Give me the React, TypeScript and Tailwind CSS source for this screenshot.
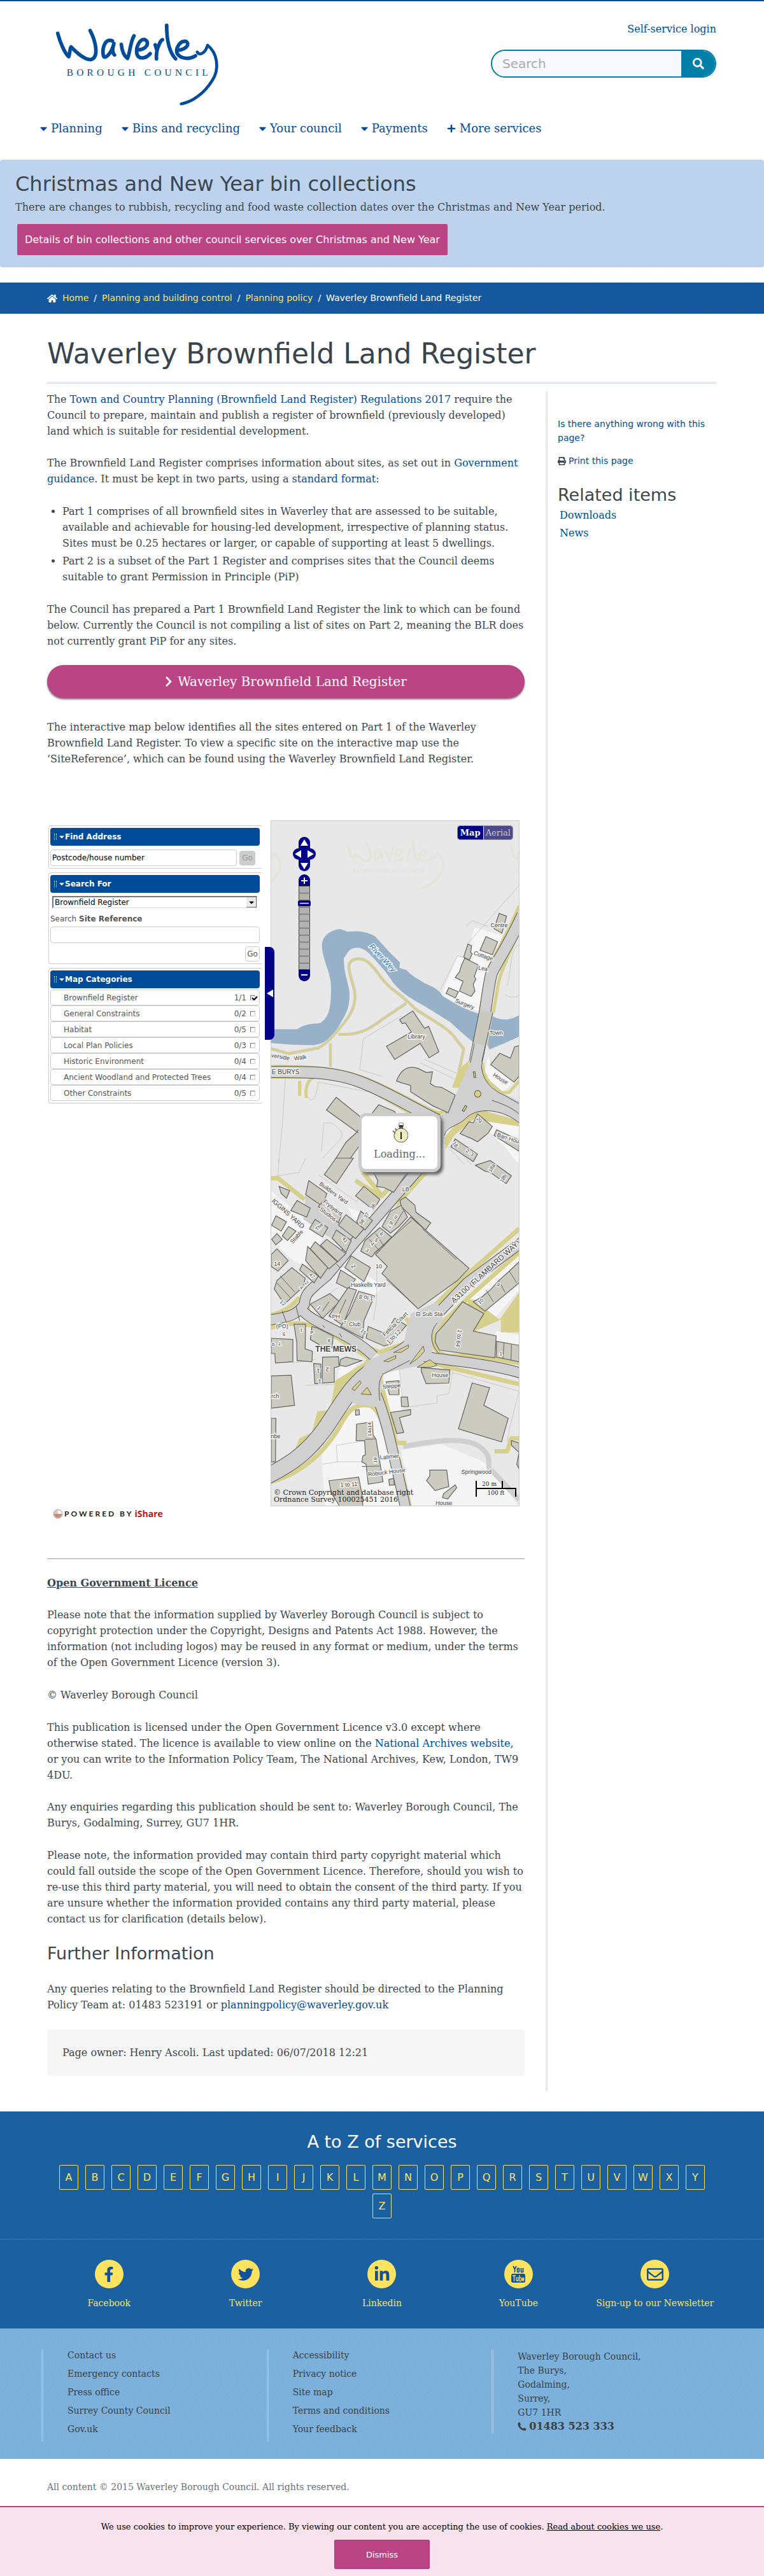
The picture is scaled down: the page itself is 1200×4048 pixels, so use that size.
import React from "react";
import { FaCaretDown, FaPlus, FaSearch, FaHome, FaPrint, FaChevronRight, FaFacebookF, FaTwitter, FaLinkedinIn, FaRegEnvelope, FaPhoneAlt } from "react-icons/fa";

const link = "text-[#004c9b] hover:underline";

function Logo() {
  return (
    <svg viewBox="75 40 790 405" className="h-[135px] w-[263px]" role="img" aria-label="Waverley Borough Council">
      <g fill="none" stroke="#004c9b" strokeWidth="17" strokeLinecap="round" strokeLinejoin="round">
        <path d="M92 98C103 140 125 192 144 208C149 200 148 172 155 162C175 182 215 224 248 222C288 214 272 135 245 85" />
        <path d="M350 134C318 118 300 165 307 202C314 228 348 188 357 146C350 170 350 192 360 200" />
        <path d="M392 150C395 180 405 205 421 216C434 190 434 138 452 110" />
        <path d="M474 176C508 174 526 146 508 130C482 114 458 165 466 197C476 222 508 218 528 194" />
        <path d="M558 218C556 190 562 168 570 152C574 140 578 132 586 128M552 152L560 178" />
        <path d="M606 60C606 110 612 180 648 218" />
        <path d="M660 178C700 174 716 148 698 136C668 130 646 170 656 194C672 220 716 222 742 204" />
        <path d="M750 186C762 208 790 188 799 154C842 188 860 262 820 322C784 380 728 422 675 431" strokeWidth="14" />
      </g>
      <text x="134" y="299" fontSize="46" letterSpacing="16" fill="#004c9b" fontFamily="Liberation Serif, serif">BOROUGH COUNCIL</text>
    </svg>
  );
}

/* Two survey sheets cover the map; each one has its own grid. */
const sheets = {
  north: { x: -26, y: -20, sx: 1 / 3, sy: 1 / 2.8 },
  south: { x: -26, y: 530, sx: 1 / 3, sy: 1 / 2.7034 },
};
type Sheet = keyof typeof sheets;
type LabelData = [string, number, number, number?, number?];

function Labels({ sheet, items }: { sheet: Sheet; items: LabelData[] }) {
  const s = sheets[sheet];
  return (
    <g fill="#444" stroke="#f4f4f4" strokeWidth="3" paintOrder="stroke" textAnchor="middle" fontFamily="Liberation Sans, sans-serif">
      {items.map(([t, x, y, r = 0, size = 9], i) => (
        <text key={i} fontSize={size} dominantBaseline="central" transform={`translate(${s.x + x * s.sx} ${s.y + y * s.sy}) rotate(${r})`}>{t}</text>
      ))}
    </g>
  );
}

const tr = (n: Sheet) => `translate(${sheets[n].x} ${sheets[n].y}) scale(${sheets[n].sx} ${sheets[n].sy})`;

function Lines({ d, color, w }: { d: string[]; color: string; w: number }) {
  return <>{d.map((p, i) => <path key={i} d={p} fill="none" stroke={color} strokeWidth={w} vectorEffect="non-scaling-stroke" strokeLinejoin="round" />)}</>;
}
function Blocks({ d }: { d: string[] }) {
  return <g fill="#cbcbc0" stroke="#636363" strokeWidth="1.2">{d.map((p, i) => <path key={i} d={"M" + p + "Z"} vectorEffect="non-scaling-stroke" />)}</g>;
}
function Watermark({ x, y }: { x: number; y: number }) {
  return (
    <g transform={`translate(${x} ${y})`} opacity=".7">
      <g transform="scale(.2)" fill="none" stroke="#e4e4d4" strokeWidth="18" strokeLinecap="round">
        <path d="M0 58C11 100 33 150 52 168L63 122C83 142 123 184 156 182C196 174 180 95 153 45M258 94C226 78 208 125 215 162C222 188 256 148 265 106L268 160M300 110L329 176L360 70M382 136C416 134 434 106 416 90C390 74 366 125 374 157C384 182 416 178 436 154M466 178L490 88M514 20C514 70 520 140 556 178M568 138C608 134 624 108 606 96C576 90 554 130 564 154C580 180 624 182 650 164M658 146C670 168 698 148 707 114C750 148 768 222 728 282C692 340 636 382 583 391" />
      </g>
      <text x="8" y="55" fontSize="9" letterSpacing="2" fill="#e1e1d2" fontFamily="Liberation Serif, serif">BOROUGH COUNCIL</text>
    </g>
  );
}

const northPaths = [
  "M77 1058L160 1080L300 1055C350 1030 390 980 425 940C460 900 480 850 470 800C460 760 440 720 445 690C450 660 500 655 530 675C580 710 580 740 640 790C700 830 720 850 760 885C830 930 900 960 940 1005L985 1060L960 1170",
  "M395 995C480 1000 530 980 600 930L715 858",
  "M357 1035L357 1138",
];
const northVerge = [
  "M77 1137C300 1135 430 1150 540 1195C660 1240 760 1300 860 1340C940 1340 960 1260 1000 1160",
  "M77 1183L290 1183C420 1195 480 1210 560 1250L740 1345",
  "M244 1275C236 1230 250 1185 290 1183",
  "M212 1200L212 1266",
  "M1246 430C1190 560 1110 670 1098 720C1080 770 1075 850 1062 885",
  "M1075 1120C1070 1190 1120 1220 1165 1252L1200 1250L1246 1200",
  "M1246 540C1190 660 1150 740 1145 790L1125 900",
];
const northRoads = [
  "M60 1161C250 1158 380 1160 500 1205C640 1255 760 1330 880 1380",
  "M1262 470C1200 600 1130 690 1115 730C1090 830 1085 950 1045 1115C1030 1190 980 1310 890 1390",
];
const northBlocks = [
  "683 930L745 892L800 968L820 960L868 1072L822 1098L780 1035L660 1106L621 1048L738 985L710 945L695 948",
  "668 1200C690 1150 720 1130 770 1145L808 1163L838 1160L828 1212L850 1225L880 1228L945 1262L912 1340L840 1310L735 1248L735 1220L690 1208",
  "384 1272L495 1355L495 1410L476 1430L430 1470L365 1568L430 1568L520 1450L338 1328",
  "555 1340L585 1305L660 1335L690 1400L560 1400",
  "1152 463L1187 475L1165 550L1128 530",
  "1090 565L1145 588L1120 645L1062 625",
  "990 660L1055 690L1035 740L1042 752L1030 775L1038 805L1020 828L965 805L982 762L945 745L965 720L975 690",
  "915 790L960 808L945 835L902 815",
  "1005 598L1022 606L1018 635L1025 640L1012 668L985 655",
  "1155 1078L1205 1100L1225 1050L1246 1045L1246 1180L1222 1205L1112 1128",
  "1010 1380L1030 1385L1050 1345L1120 1400L1100 1430L1050 1468L1025 1455L968 1432",
  "945 1455L1050 1522L1030 1555L925 1490",
  "1140 1415L1246 1460L1246 1510L1128 1440",
];
const plotLines = [
  "M145 1180L130 1400L112 1568", "M300 1205L600 1260", "M512 1015L690 915M512 1015L495 1150L600 1180", "M1246 340L1000 600",
  "M875 800L955 650L1000 660", "M995 520L1025 495L1098 520", "M250 1270C270 1300 290 1280 300 1205", "M315 1510L325 1385L360 1385C390 1400 430 1430 400 1460L320 1540",
  "M780 1120L960 1200M800 1105L960 1170", "M1246 600C1200 620 1210 720 1190 780M1180 820C1210 840 1246 830 1246 820", "M880 1460L990 1568M900 1440L1020 1568",
];

const southVerge = [
  "M800 60L630 215L480 370L400 455L255 590C230 650 270 700 400 755L590 825L700 790C740 760 740 700 710 680",
  "M700 60L600 160L510 60M595 165L475 95",
  "M77 85L110 85L235 175",
  "M77 665C130 660 190 620 210 590",
  "M77 720C190 690 240 700 330 730L540 850C520 890 440 960 400 1020C370 1090 330 1150 260 1220C190 1280 130 1310 77 1325",
  "M1246 300L1000 495L830 640",
  "M1246 400L1010 590L850 730C830 770 840 830 910 840L1050 840L1246 870",
  "M820 860L900 885L1246 960",
  "M77 1375C220 1340 330 1250 400 1140C450 1050 490 1045 540 1050C580 1060 600 1120 660 1220L730 1478",
  "M590 920C600 1000 640 1090 665 1210L715 1210",
  "M1130 1245L1190 1245L1210 1190L1246 1190",
];
const southRoads = [
  "M780 40L620 205L470 360L340 500C260 560 235 575 235 620C190 680 130 675 60 690",
  "M220 640C260 700 450 740 560 840",
  "M1262 355L1000 530L800 720",
  "M780 840C900 860 1100 870 1262 915",
  "M570 1000C610 1080 640 1200 670 1320L712 1490",
];
const southWide = ["M800 720C780 800 640 850 560 900C460 950 400 1060 330 1150C250 1250 170 1300 60 1350"];
const southBlocks = [
  "735 250L1010 468L955 520L770 640L600 490L625 460L570 410",
  "383 0L465 0L385 108L328 70", "560 60L720 60L655 145L610 125L575 120L580 95",
  "115 120L165 138L150 170L125 150", "255 95L340 150L320 205L240 155", "300 205L330 175L410 240L395 275",
  "515 120L590 175L560 220L475 160", "430 240L515 300L475 342L395 285", "500 225L555 265L520 305L480 270",
  "685 180L710 165L755 200L760 230L830 275L805 305L690 205", "640 225L690 200L720 250L680 290L640 318L600 290",
  "590 295L645 335L550 420L500 395L520 350", "455 415L545 465L515 525L425 465", "405 475L475 515L440 555L385 530",
  "200 180L262 212L245 250L170 222", "100 245L150 270L125 310L80 285", "285 260L345 295L320 335L258 300", "160 290L195 310L155 350L130 330", "105 320L130 345L100 368L80 345",
  "250 375L345 465L310 510L240 435", "285 355L390 440L350 470L262 385", "340 345L430 405L392 440L310 370", "385 305L455 350L430 400L365 340",
  "175 465L238 510L230 545L140 620L92 555L105 520", "225 450L300 500L280 530L212 475", "78 410L105 385L158 435L110 480L78 460",
  "355 575L400 610L320 680L262 620", "440 550L480 560L415 710L350 670", "490 565L565 585L515 690L510 765L405 715L445 660",
  "535 715L615 745L660 680L715 710L640 790L610 798L525 765",
  "185 705L240 705L238 810L272 820L270 865L200 860L198 780", "78 765L180 770L180 865L98 870L95 830L78 830", "270 715L290 720L370 755L365 805L310 795L262 770",
  "320 845L395 843L398 885L375 890L375 952L318 955", "278 872L312 875L312 958L283 958", "430 845L505 860L430 885L400 880L405 855",
  "78 925L172 922L188 1050L78 1062", "78 1105L100 1105L98 1290L78 1290",
  "785 890L920 900L915 955L808 958L785 905", "1025 955L1107 975L1080 1050L1195 1105L1163 1205L960 1150",
  "620 950L680 945L680 1005L635 1005", "690 1015L720 1015L725 1055L692 1055", "640 1080L735 1068L735 1090L682 1102L702 1165L670 1170",
  "475 1070L492 1068L494 1090L476 1092", "480 1130L555 1120L558 1175L572 1195L585 1265L605 1375L535 1385L525 1300L505 1290L510 1265L522 1260L518 1200L478 1200",
  "350 1370L490 1355L505 1425L510 1478L400 1478L360 1420", "632 1365L655 1360L658 1388L635 1390",
  "825 1325L905 1325L915 1395L850 1412L810 1370L825 1350", "890 1425L945 1388L952 1400L925 1430L910 1448L885 1442",
  "980 610L1080 660L1030 735L1138 755L1132 848L870 815L850 780L855 745L910 690",
  "1030 610L1070 590L1110 560L1150 520L1200 480L1246 440L1246 530L1085 650", "1140 778L1246 795L1246 865L1138 845",
  "1040 30L1110 10L1210 75L1185 108L1110 60L1085 55", "1210 1200L1246 1210L1246 1320L1235 1300L1246 1250L1210 1220",
];
const islands = ["M458 980L495 945L502 955L470 988Z", "M502 1002L530 973L550 1005Z", "M608 862L665 838L665 850L630 865Z", "M655 825L725 793L725 805L690 825Z", "M730 875L795 798L800 820L770 850Z", "M765 888L825 856L860 880L830 888Z"];

function MapDrawing() {
  return (
    <svg viewBox="0 0 389 1076" preserveAspectRatio="xMidYMid slice" className="block h-full w-full" aria-label="Map of Godalming" role="img">
      <rect width="389" height="1076" fill="#e8e8e8" />
      <Watermark x={120} y={27} /><Watermark x={-136} y={27} /><Watermark x={376} y={27} />
      <g transform={tr("north")}>
        <path d="M1035 525L1170 560L1070 900L880 825L955 650L1000 660Z M1112 1128L1222 1205L1170 1250L1080 1180L1100 1090Z M1040 1330L1246 1400L1246 1568L1180 1490L1110 1430Z" fill="#f6f6f6" />
        <Lines d={plotLines} color="#c9c9c4" w={1} />
        <path fill="#97b1c8" d="M77 972L200 973C240 945 280 950 310 945C350 920 360 880 360 790C360 720 315 660 317 600C320 555 370 532 405 532L435 543C480 540 520 540 565 562C600 595 640 640 660 655L685 680L682 703L715 712C740 740 770 750 800 770C840 785 870 800 885 825C940 860 1000 890 1060 905L1120 915C1170 940 1210 930 1246 910L1246 1005C1190 1030 1150 1045 1105 1062L1098 1040L1030 1030C990 1000 950 965 920 940C850 900 820 880 780 860C720 830 680 800 650 765C620 720 590 690 540 640C500 600 450 610 435 640L420 660C420 740 450 780 447 830C445 890 420 920 405 945C380 990 340 1040 270 1043L165 1040L77 1033Z" />
        <Lines d={northPaths} color="#cfcfcb" w={5} />
        <Lines d={northPaths} color="#d6d08c" w={3} />
        <Lines d={northVerge} color="#d6d08c" w={5} />
        <path d="M960 1150L1015 1105L985 1230L930 1230Z M895 1450L900 1500L940 1440L1030 1370L1246 1400L1246 1375L1060 1325L950 1385Z" fill="#d6d08c" />
        <Lines d={northRoads} color="#555" w={19} />
        <path d="M1015 1120L1070 1120C1068 1200 1120 1240 1180 1260L1246 1290L1246 1385C1180 1330 1060 1310 1000 1360C960 1400 900 1400 895 1440L870 1568L720 1568L780 1450L840 1360L910 1340Z" fill="#d0d0d0" />
        <Lines d={["M1068 1120C1068 1200 1120 1240 1180 1265L1246 1300", "M1246 1385C1180 1330 1060 1310 1000 1360C960 1400 900 1400 895 1440"]} color="#555" w={1} />
        <Lines d={northRoads} color="#d0d0d0" w={17} />
        <path d="M1060 885L1125 900L1098 1045L1030 1035Z" fill="#c9c9bf" />
        <Lines d={["M1060 885L1012 1110", "M1122 900L1070 1115", "M1118 1285C1160 1300 1200 1310 1246 1345"]} color="#555" w={1} />
        <ellipse cx="1051" cy="1257" rx="15" ry="15" fill="#d6d08c" stroke="#555" strokeWidth="3" />
        <path d="M1030 1160L1038 1160L1042 1185L1034 1185Z M978 1330L992 1308L1000 1313L986 1335Z" fill="#d6d08c" stroke="#555" strokeWidth="3" />
        <Blocks d={northBlocks} />
      </g>
      <g transform={tr("south")}>
        <path d="M77 140L330 330L250 460L190 440L77 350Z M440 210L560 250L500 330Z M380 460L500 480L600 540L560 600L500 580L450 560Z M1246 410L1010 600L1130 680L1246 560Z M1140 735L1246 750L1246 880L1090 850Z M590 930L680 880L700 1050L660 1130Z M315 1250L460 1050L560 1060L660 1300L680 1478L330 1478Z M690 1240L880 1215L1080 1290L1246 1478L740 1478Z M400 860L510 850L390 960Z" fill="#f5f5f5" />
        <Lines color="#cacac5" w={1} d={["M680 880L700 1060L860 1040L860 1010L915 1000L935 900", "M385 1220L520 1200M385 1220L390 1290L510 1290M320 1300L390 1290", "M115 0L110 80M77 80L210 60L240 0", "M180 870L290 855M240 965L390 960", "M575 450L575 600L560 690", "M300 70L480 185L500 150", "M930 910L1246 990L1200 1150L1190 1205", "M250 450L240 510M360 570L400 545"]} />
        <Lines color="#cfcfcf" w={8} d={["M700 1225C900 1190 1000 1190 1060 1225C1130 1270 1090 1310 1110 1320L1246 1450"]} />
        <path d="M240 150L480 340L440 390L230 260Z" fill="#d0d0d0" />
        <Lines d={southVerge} color="#d6d08c" w={7} />
        <path d="M380 945L540 855L420 1060L320 1190L77 1340L77 1310L185 1250L210 1190L270 1165L295 1075L355 1070Z M725 60L820 60L660 220Z M1000 600L1030 600L1160 690L1160 740L1246 740L1246 570L1150 690L1035 735Z" fill="#d6d08c" />
        <Lines d={southRoads} color="#555" w={17} />
        <Lines d={southWide} color="#555" w={26} />
        <Lines d={southRoads} color="#d0d0d0" w={15} />
        <Lines d={southWide} color="#d0d0d0" w={24} />
        <path d="M735 660L860 610L890 690L835 750L840 820L780 880L600 915L590 1060L460 1040L450 950L545 855L700 790Z" fill="#d0d0d0" />
        <Lines d={["M590 1030C580 960 590 930 610 915L730 860", "M860 700C820 740 830 800 870 830", "M130 650L150 700M195 630L212 690", "M385 450L402 465M320 710L330 720M400 745L410 760"]} color="#555" w={1} />
        <g fill="#d6d08c" stroke="#555" strokeWidth="2.5">{islands.map((d, i) => <path key={i} d={d} />)}</g>
        <Blocks d={southBlocks} />
        <Lines color="#636363" w={1} d={["M560 405L740 265", "M790 300L950 430", "M620 515L760 630", "M700 225L660 285M570 320L610 375M540 345L590 395", "M320 650L350 610M385 690L430 600", "M1090 560L1125 610M1150 520L1180 570M1200 480L1235 530", "M1175 782L1170 852M1210 790L1208 858", "M520 1195L572 1192M505 1310L590 1308", "M120 500L190 570M105 530L170 595"]} />
      </g>
      <Labels sheet="north" items={[["Centre", 1152, 514, 0, 9], ["Cottage", 1078, 650, 18], ["Lea", 1076, 705, 10], ["Surgery", 990, 862, 22], ["Library", 762, 1004], ["Town", 1138, 988], ["House", 1158, 1190, 32], ["verside", 122, 1094, 10], ["Walk", 215, 1098, -8], ["E BURYS", 146, 1160, 0, 10], ["20", 1058, 1372, 50, 8], ["Barr Hou", 1194, 1452, 18], ["18", 945, 1480, 60, 8], ["2", 1003, 1508, 30, 8], ["3", 1024, 1524, 30, 8]]} />
      <g fill="#1470c8" stroke="#f4f8fc" strokeWidth="3" paintOrder="stroke" fontFamily="Liberation Sans, sans-serif">
        <text fontSize="12" fontStyle="italic" textAnchor="middle" transform="translate(172 218) rotate(47)">River Wey</text>
      </g>
      <Labels sheet="south" items={[["LB", 712, 133], ["18a", 1118, 42, -60, 8], ["18b", 1172, 86, -60, 8], ["Builders Yard", 372, 148, 36], ["Frysyard", 368, 210, 38], ["Studios", 345, 238, 38], ["IGGINS YARD", 158, 235, 42, 10], ["Stable", 198, 333, -48], ["The", 305, 292, -45, 8], ["36", 558, 205, -55, 8], ["37", 527, 243, -55, 8], ["38", 505, 272, -55, 8], ["41", 425, 347, 50, 8], ["9", 665, 250, 40, 8], ["8 7", 638, 282, 120, 8], ["6", 597, 322, 40, 8], ["5", 573, 348, 40, 8], ["4", 555, 365, 40, 8], ["3", 530, 392, 40, 8], ["14", 106, 450], ["47", 270, 500, 45, 8], ["2", 245, 530, 40, 8], ["4", 220, 550, 40, 8], ["12", 132, 615, 40, 8], ["2", 465, 460, 60, 9], ["10", 585, 460], ["Haskells Yard", 535, 537], ["1", 303, 637, 40, 8], ["PH", 383, 674], ["7", 425, 698, 0, 8], ["Club", 472, 705], ["15", 512, 738, 40, 8], ["1 to 8", 525, 593, 188], ["Felicia Court", 662, 705, -44], ["1 to 12", 655, 758, -44], ["⊟ Sub Sta", 822, 661], ["(PO)", 130, 713], ["5", 138, 748, 180, 8], ["7", 118, 788, 180, 8], ["6", 88, 790, 0, 8], ["1", 220, 730, 180, 8], ["4", 268, 740, 60, 8], ["8", 350, 775, 0, 8], ["2", 342, 898, 180, 9], ["1", 300, 902, 180, 9], ["1", 307, 948, 180, 9], ["9", 1148, 537, 40, 8], ["10", 1065, 608, -40, 8], ["1 to 64", 962, 765, 97], ["1", 1160, 832, 0, 8], ["House", 874, 921], ["Steppe", 645, 968, -5], ["rch", 97, 1010], ["nbe", 99, 1181], ["14a14", 540, 1152, -90, 8], ["18", 568, 1283, -90, 8], ["Latimer", 635, 1268, -5], ["Robuck House", 622, 1334, -7], ["1 to 11", 444, 1386, -4], ["Springwood", 1045, 1332], ["House", 892, 1465]]} />
      <Labels sheet="south" items={[["A3100 (FLAMBARD WAY)", 1088, 482, -42, 12]]} />
      <g fontWeight="bold"><Labels sheet="south" items={[["THE MEWS", 383, 811, 0, 12]]} /></g>
    </svg>
  );
}

function PanZoom() {
  return (
    <svg viewBox="0 0 36 228" className="absolute top-[25px] left-[34px] h-[228px] w-9" aria-label="Map pan and zoom" role="img">
      <rect x="9" width="18" height="54" rx="9" fill="#00008b" />
      <rect y="18" width="36" height="18" rx="9" fill="#00008b" />
      <g fill="#fff"><path d="M18 4L24 14H12Z" /><path d="M18 51L24 41H12Z" /><path d="M3 27L13 21V33Z" /><path d="M33 27L23 21V33Z" /></g>
      <path d="M9 77V68a9 9 0 0 1 18 0v9Z M9 209v9a9 9 0 0 0 18 0v-9Z" fill="#00008b" />
      <path d="M13 69h10M18 64v10M13 217h10" stroke="#fff" strokeWidth="2" />
      <rect x="9.5" y="77.500" width="17" height="131" fill="#b2b2b2" stroke="#444" />
      <path d="M9 88.500h18M9 99.500h18M9 110.500h18M9 121.500h18M9 132.500h18M9 143.500h18M9 154.500h18M9 165.500h18M9 176.500h18M9 187.500h18M9 198.500h18" stroke="#777" strokeWidth="1.500" />
      <rect x="8" y="100" width="20" height="9" rx="2" fill="#00008b" /><path d="M11 104.500h14" stroke="#fff" strokeWidth="1.500" />
    </svg>
  );
}

function Panel({ title, children }: { title: string; children: React.ReactNode }) {
  return (
    <section className="mb-1.5 rounded-l border border-r-0 border-[#ccc] py-[3px] pr-[3px] pl-0.5">
      <h3 className="flex h-7 items-center rounded bg-[#004c9b] pl-1.5 font-bold text-white">
        <span className="mr-1 h-[10px] w-1 border-x border-dotted border-white" />
        <FaCaretDown className="mr-px h-3 w-2" />{title}
      </h3>
      {children}
    </section>
  );
}

const categories = [["Brownfield Register", "1/1"], ["General Constraints", "0/2"], ["Habitat", "0/5"], ["Local Plan Policies", "0/3"], ["Historic Environment", "0/4"], ["Ancient Woodland and Protected Trees", "0/4"], ["Other Constraints", "0/5"]];

function MapWidget() {
  return (
    <div className="relative flex justify-between pr-2 pl-0.5">
      <div className="flex w-[335px] flex-col pt-2 font-[DejaVu_Sans,sans-serif] text-[12px] leading-4 text-[#555]">
        <Panel title="Find Address">
          <div className="mt-1.5 flex items-center gap-1">
            <input aria-label="Postcode or house number" defaultValue="Postcode/house number" className="h-[26px] w-[293px] rounded border border-[#ccc] px-0.5 text-black" />
            <button disabled className="h-[23px] w-[25px] rounded bg-[#ccc] text-[#999]">Go</button>
          </div>
        </Panel>
        <Panel title="Search For">
          <div className="relative mt-[5px] mr-1 ml-[3px]">
            <select aria-label="Search for" className="h-[19px] w-full appearance-none border border-t-2 border-l-2 border-[#ddd] border-t-[#777] border-l-[#777] bg-white pl-0.5 text-black"><option>Brownfield Register</option></select>
            <span className="pointer-events-none absolute top-0.5 right-px flex h-4 w-4 items-center justify-center border-r border-b border-[#777] bg-[#eceae6] text-black"><FaCaretDown /></span>
          </div>
          <label htmlFor="siteref" className="mt-[9px] block">Search <b>Site Reference</b></label>
          <input id="siteref" className="mt-1 h-[26px] w-full rounded border border-[#ccc] px-1" />
          <div className="mt-[5px] flex justify-end"><button className="h-6 w-[23px] rounded border border-[#ccc]">Go</button></div>
        </Panel>
        <Panel title="Map Categories">
          <ul className="mt-0.5">
            {categories.map(([n, c], i) => (
              <li key={n} className="flex h-[25px] items-center rounded border border-[#ccc] pr-1.5 pl-5">
                <label htmlFor={"cat" + i} className="flex-1">{n}</label>
                <span className="mr-1.5">{c}</span>
                <span className="relative size-2">
                  <input id={"cat" + i} type="checkbox" defaultChecked={i === 0} className="peer block size-2 appearance-none border border-[#ccc] border-t-[#777] border-l-[#777] bg-white" />
                  <svg viewBox="0 0 10 8" className="pointer-events-none absolute top-px left-0.5 hidden h-2 w-2.5 peer-checked:block"><path d="M1 3l3 3 5-5" fill="none" stroke="#000" strokeWidth="2.200" /></svg>
                </span>
              </li>
            ))}
          </ul>
        </Panel>
        <p className="mt-auto flex items-center gap-0.5 pl-[7px] text-[12px] font-bold text-[#222]">
          <svg viewBox="0 0 16 16" className="size-4"><circle cx="8" cy="8" r="7" fill="#dcc8bf" stroke="#aaa" /><path d="M8 8V2a6 6 0 0 1 6 6Z" fill="#fff" /><path d="M8 8h6a6 6 0 0 1-12 0Z" fill="#c98d78" /></svg>
          <span className="font-[Lato,sans-serif] tracking-[3px]">POWERED BY</span><span className="font-[Open_Sans,sans-serif] text-[14px] text-[#b8141a]">iShare</span>
        </p>
      </div>
      <button aria-label="Hide panel" className="absolute top-[199px] left-[342px] z-10 flex h-[146px] w-[15px] items-center justify-center rounded-r-lg bg-[#00008b] text-white">
        <svg viewBox="0 0 10 12" className="h-3 w-2.5"><path d="M0 6L10 0V12Z" fill="#fff" /></svg>
      </button>
      <div className="relative mb-5 h-[1078px] w-[391px] border border-[#ccc]">
        <MapDrawing />
        <PanZoom />
        <div className="absolute top-[7px] right-[9px] flex gap-px rounded border border-[#999] text-[13px] leading-[21px]">
          <button className="rounded-l bg-[#00008b] px-1 font-bold text-white">Map</button>
          <button className="rounded-r bg-[#4a4a8b] px-[3px] text-[#c8c8d8]">Aerial</button>
        </div>
        <div className="absolute top-[459px] left-[137px] flex h-[93px] w-[129px] flex-col items-center rounded-xl border-[5px] border-[#ccc] bg-white pt-2.5 text-[16px] leading-6 text-[#666] shadow-[4px_4px_4px_#666]">
          <svg viewBox="0 0 26 32" className="h-8 w-[26px]"><circle cx="15" cy="20" r="11" fill="#eeeec0" stroke="#555" /><path d="M15 15V26" stroke="#222" strokeWidth="2" /><rect x="12" y="4" width="6" height="5" fill="#333" /><circle cx="15" cy="4" r="4" fill="none" stroke="#777" /><path d="M2 13l4 4M6 9l2 4" stroke="#777" strokeWidth="2" /></svg>
          <span className="mt-1.5">Loading...</span>
        </div>
        <p className="absolute bottom-1 left-1 text-[11px] leading-[11px] whitespace-nowrap text-[#222]">© Crown Copyright and database right<br />Ordnance Survey 100025451 2016</p>
        <div className="absolute right-1 bottom-[14px] w-16 text-center text-[9px] leading-[11px] text-[#222]">
          <div className="w-[43px] border-x-2 border-black">20 m</div>
          <div className="border-x-2 border-t-2 border-black pt-px">100 ft</div>
        </div>
      </div>
    </div>
  );
}

const letters = "ABCDEFGHIJKLMNOPQRSTUVWXYZ".split("");

function YouTubeMark() {
  return (
    <svg viewBox="0 0 24 28" className="h-7 w-6" role="img" aria-label="YouTube">
      <g fill="none" stroke="#0f519c" strokeWidth="1.800"><path d="M4 1l2.500 5v5M9 1L6.500 6" /><rect x="10.500" y="4.500" width="3" height="6" rx="1.500" /><path d="M16.500 4v5.500c0 2 3 1 3-.5M19.500 4v7" /></g>
      <rect x="1" y="13" width="22" height="14" rx="3" fill="#0f519c" />
      <g fill="none" stroke="#ffe25e" strokeWidth="1.300"><path d="M3 16h5M5.500 16v9M9 18v5c0 2 2 1 2.500 0M11.700 18v7M14 15v9.500c3 1 3-1 3-3s-1-3-3-2M21 22h-2.500c0 3.500 2.500 2 2.500.5M18.500 22c0-4 2.500-3 2.500 0" /></g>
    </svg>
  );
}

const socials: [string, React.ReactNode][] = [
  ["Facebook", <FaFacebookF className="size-6" />], ["Twitter", <FaTwitter className="size-6" />], ["Linkedin", <FaLinkedinIn className="size-[26px]" />], ["YouTube", <YouTubeMark />], ["Sign-up to our Newsletter", <FaRegEnvelope className="size-[26px]" />],
];

export default function App() {
  return (
    <div className="bg-white font-[DejaVu_Serif,serif] text-[16px] leading-[25px] text-[#3c4650]">
      <header className="h-[251px] border-t-2 border-[#004c9b]">
        <div className="flex h-[172px] justify-between pr-[75px] pl-[85px]">
          <a href="#" className="pt-[31px]"><Logo /></a>
          <div className="flex flex-col items-end pt-[31px]">
            <a href="#" className={link}>Self-service login</a>
            <form className="mt-5 flex h-11 w-[354px] overflow-hidden rounded-full border-2 border-[#007fa8] bg-[#f8f9ff] font-[DejaVu_Sans,sans-serif]">
              <input aria-label="Search" placeholder="Search" className="w-full min-w-0 flex-1 bg-transparent pl-4 text-[20px] outline-none placeholder:text-[#aaa]" />
              <button type="button" aria-label="Search" className="flex w-[53px] items-center justify-center bg-[#007fa8] text-white"><FaSearch className="size-[18px]" /></button>
            </form>
          </div>
        </div>
        <nav className="mt-4 flex gap-[30px] pl-[63px] text-[18px] leading-6 text-[#004c9b]">
          {["Planning", "Bins and recycling", "Your council", "Payments"].map((n) => <a href="#" key={n} className="flex items-center gap-1.5"><FaCaretDown className="h-[18px] w-[11px]" />{n}</a>)}
          <a href="#" className="flex items-center gap-1.5"><FaPlus className="size-3.5" />More services</a>
        </nav>
      </header>

      <section className="rounded-sm bg-[#bcd2ed] px-6 pt-[18px] pb-[19px]">
        <h2 className="font-[DejaVu_Sans,sans-serif] text-[32px] leading-10">Christmas and New Year bin collections</h2>
        <p className="mt-1">There are changes to rubbish, recycling and food waste collection dates over the Christmas and New Year period.</p>
        <a href="#" className="mt-3.5 ml-[3px] inline-block rounded-xs bg-[#bb4484] px-3 py-3 font-[DejaVu_Sans,sans-serif] text-[16px] text-white">Details of bin collections and other council services over Christmas and New Year</a>
      </section>

      <nav aria-label="Breadcrumb" className="mt-6 flex h-[49px] items-center gap-2 bg-[repeating-linear-gradient(150deg,#0f57a5_0_1px,#17589a_1px_3px)] px-[74px] font-[DejaVu_Sans,sans-serif] text-[14px] text-white">
        <FaHome className="size-4" />
        <a href="#" className="text-[#ffe25e]">Home</a><span>/</span>
        <a href="#" className="text-[#ffe25e]">Planning and building control</a><span>/</span>
        <a href="#" className="text-[#ffe25e]">Planning policy</a><span>/</span>
        <span>Waverley Brownfield Land Register</span>
      </nav>

      <div className="pr-[75px] pl-[74px]">
        <h1 className="border-b-3 border-double border-[#d3dce4] pt-9 pb-[18px] font-[DejaVu_Sans,sans-serif] text-[44px] leading-[53px] text-[#38444f]">Waverley Brownfield Land Register</h1>
        <div className="mt-3 flex">
          <main className="min-w-0 flex-1 pr-[33px]">
            <p>The <a href="#" className={link}>Town and Country Planning (Brownfield Land Register) Regulations 2017</a> require the Council to prepare, maintain and publish a register of brownfield (previously developed) land which is suitable for residential development.</p>
            <p className="mt-[25px]">The Brownfield Land Register comprises information about sites, as set out in <a href="#" className={link}>Government guidance</a>. It must be kept in two parts, using a <a href="#" className={link}>standard format</a>:</p>
            <ul className="mt-[26px] list-disc space-y-[3px] pl-6">
              <li>Part 1 comprises of all brownfield sites in Waverley that are assessed to be suitable, available and achievable for housing-led development, irrespective of planning status. Sites must be 0.25 hectares or larger, or capable of supporting at least 5 dwellings.</li>
              <li>Part 2 is a subset of the Part 1 Register and comprises sites that the Council deems suitable to grant Permission in Principle (PiP)</li>
            </ul>
            <p className="mt-[26px]">The Council has prepared a Part 1 Brownfield Land Register the link to which can be found below. Currently the Council is not compiling a list of sites on Part 2, meaning the BLR does not currently grant PiP for any sites.</p>
            <a href="#" className="mt-[25px] flex h-[52px] items-center justify-center gap-2 rounded-full bg-[#bb4484] text-[20px] text-white shadow-[0_2px_3px_#777]"><FaChevronRight className="h-[18px] w-3" />Waverley Brownfield Land Register</a>
            <p className="mt-[33px] mb-[84px]">The interactive map below identifies all the sites entered on Part 1 of the Waverley Brownfield Land Register. To view a specific site on the interactive map use the ‘SiteReference’, which can be found using the Waverley Brownfield Land Register.</p>
            <MapWidget />
            <hr className="mt-[62px] border-t border-[#999]" />
            <h2 className="mt-[25px] font-bold underline">Open Government Licence</h2>
            <p className="mt-[25px]">Please note that the information supplied by Waverley Borough Council is subject to copyright protection under the Copyright, Designs and Patents Act 1988. However, the information (not including logos) may be reused in any format or medium, under the terms of the Open Government Licence (version 3).</p>
            <p className="mt-[26px]">© Waverley Borough Council</p>
            <p className="mt-[26px]">This publication is licensed under the Open Government Licence v3.0 except where otherwise stated. The licence is available to view online on the <a href="#" className={link}>National Archives website</a>, or you can write to the Information Policy Team, The National Archives, Kew, London, TW9 4DU.</p>
            <p className="mt-[25px]">Any enquiries regarding this publication should be sent to: Waverley Borough Council, The Burys, Godalming, Surrey, GU7 1HR.</p>
            <p className="mt-[26px]">Please note, the information provided may contain third party copyright material which could fall outside the scope of the Open Government Licence. Therefore, should you wish to re-use this third party material, you will need to obtain the consent of the third party. If you are unsure whether the information provided contains any third party material, please contact us for clarification (details below).</p>
            <h2 className="mt-6 font-[DejaVu_Sans,sans-serif] text-[27px] leading-9">Further Information</h2>
            <p className="mt-[25px]">Any queries relating to the Brownfield Land Register should be directed to the Planning Policy Team at: 01483 523191 or <a href="#" className={link}>planningpolicy@waverley.gov.uk</a></p>
            <p className="mt-[26px] mb-6 rounded-sm bg-[#f6f6f6] p-6">Page owner: Henry Ascoli. Last updated: 06/07/2018 12:21</p>
          </main>
          <aside className="w-[268px] border-l-3 border-double border-[#d3dce4] pt-10 pl-4">
            <div className="font-[DejaVu_Sans,sans-serif] text-[14px] leading-[22px]">
              <a href="#" className={link}>Is there anything wrong with this page?</a>
              <p className="mt-3.5 flex items-center gap-1"><FaPrint className="size-[13px]" /><a href="#" className={link}>Print this page</a></p>
            </div>
            <h2 className="mt-[25px] font-[DejaVu_Sans,sans-serif] text-[27px] leading-9">Related items</h2>
            <ul className="pl-[3px] text-[16px] leading-7"><li><a href="#" className={link}>Downloads</a></li><li><a href="#" className={link}>News</a></li></ul>
          </aside>
        </div>
      </div>

      <footer className="mt-8">
        <section className="bg-[repeating-linear-gradient(150deg,#1560a8_0_1px,#1e609c_1px_3px)] pt-[30px] pb-8">
          <h2 className="text-center font-[DejaVu_Sans,sans-serif] text-[27px] leading-9 text-white">A to Z of services</h2>
          <ul className="mt-[18px] flex flex-wrap justify-center gap-x-[11px] gap-y-1.5 px-20 font-[DejaVu_Sans,sans-serif] text-[16px]">
            {letters.map((l) => <li key={l}><a href="#" className="flex h-[39px] w-[30px] items-center justify-center rounded-xs border border-[#ffe25e] text-[#ffe25e]">{l}</a></li>)}
          </ul>
        </section>
        <ul className="grid grid-cols-5 border-t border-[#3c80bd] bg-[repeating-linear-gradient(150deg,#1560a8_0_1px,#1e609c_1px_3px)] px-16 pt-8 pb-[29px] text-[14px] leading-[22px] text-[#ffe25e]">
          {socials.map(([n, icon]) => (
            <li key={n}><a href="#" className="flex flex-col items-center gap-3"><span className="flex size-[45px] items-center justify-center rounded-full bg-[#ffe25e] text-[#0f519c]">{icon}</span><span className="whitespace-nowrap">{n}</span></a></li>
          ))}
        </ul>
        <div className="grid h-[205px] grid-cols-3 items-start bg-[repeating-linear-gradient(150deg,#74aedb_0_1px,#7fb1da_1px_3px)] pt-[33px] pr-[74px] pl-[65px] text-[14px] text-[#3c4043]">
          <ul className="border-l-3 border-double border-[#a9c8ec] pl-[38px]">
            {["Contact us", "Emergency contacts", "Press office", "Surrey County Council", "Gov.uk"].map((t) => <li key={t} className="h-[29px] leading-[19px]"><a href="#">{t}</a></li>)}
          </ul>
          <ul className="border-l-3 border-double border-[#a9c8ec] pl-[38px]">
            {["Accessibility", "Privacy notice", "Site map", "Terms and conditions", "Your feedback"].map((t) => <li key={t} className="h-[29px] leading-[19px]"><a href="#">{t}</a></li>)}
          </ul>
          <address className="border-l-3 border-double border-[#a9c8ec] pl-[38px] leading-[22px] not-italic">
            Waverley Borough Council,<br />The Burys,<br />Godalming,<br />Surrey,<br />GU7 1HR<br />
            <b className="flex items-center gap-1 text-[16px]"><svg viewBox="0 0 14 14" className="size-3.5" fill="currentColor" aria-hidden="true"><path d="M3.300 .5L5 3.800C5.300 4.400 3.600 5 3.700 5.600C4.200 7.300 6.600 9.800 8.400 10.300C9 10.400 9.600 8.700 10.200 9L13.500 10.700C14 11 13.200 13.600 10.800 13.600C6 13.600 .4 8 .4 3.200C.4 .8 3 0 3.300 .5Z" /></svg>01483 523 333</b>
          </address>
        </div>
        <p className="flex h-[74px] items-center px-[74px] pt-3.5 text-[14px] text-[#68727a]">All content © 2015 Waverley Borough Council. All rights reserved.</p>
        <div className="border-t-2 border-[#bb4484] bg-[#f7e2ee] pt-[18px] pb-[11px] text-center text-[13px] text-black">
          <p>We use cookies to improve your experience. By viewing our content you are accepting the use of cookies. <a href="#" className="underline">Read about cookies we use</a>.</p>
          <button className="mt-2 h-[46px] w-[150px] rounded-xs border border-[#a33a72] bg-[#bb4484] font-[DejaVu_Sans,sans-serif] text-white">Dismiss</button>
        </div>
      </footer>
    </div>
  );
}
